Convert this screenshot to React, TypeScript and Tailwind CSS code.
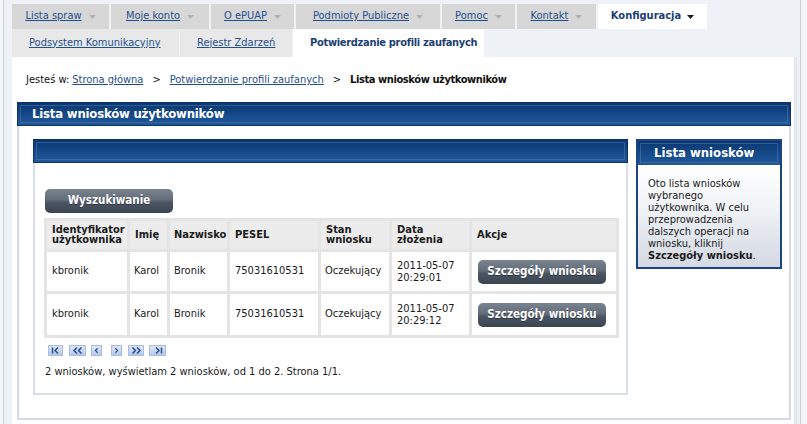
import React from 'react';

const font = "font-['DejaVu_Sans_Condensed','DejaVu_Sans',sans-serif]";

const topTabs = [
  { label: 'Lista spraw', w: 'w-[97px]' },
  { label: 'Moje konto', w: 'w-[98px]' },
  { label: 'O ePUAP', w: 'w-[83px]' },
  { label: 'Podmioty Publiczne', w: 'w-[144px]' },
  { label: 'Pomoc', w: 'w-[73px]' },
  { label: 'Kontakt', w: 'w-[79px]' },
];

const subTabs = [
  { label: 'Podsystem Komunikacyjny', w: 'w-[167px]' },
  { label: 'Rejestr Zdarzeń', w: 'w-[112px]' },
];

const rows = [
  { id: 'kbronik', name: 'Karol', surname: 'Bronik', pesel: '75031610531', status: 'Oczekujący', date: '2011-05-07', time: '20:29:01', h: 'h-[42px]' },
  { id: 'kbronik', name: 'Karol', surname: 'Bronik', pesel: '75031610531', status: 'Oczekujący', date: '2011-05-07', time: '20:29:12', h: 'h-[44px]' },
];

const Caret = ({ color }: { color: string }) => (
  <svg width="7" height="4" viewBox="0 0 7 4" className="mt-[1px]">
    <path d="M0 0h7L3.5 4z" fill={color} />
  </svg>
);

const NavyBar = ({ children, className = '' }: { children?: React.ReactNode; className?: string }) => (
  <div
    className={`bg-[linear-gradient(to_bottom,#0a3670,#164a8a_55%,#22589a)] border border-[#0b3466] p-[2px] ${className}`}
  >
    <div className="h-full border border-[#4a74aa]/60 flex items-center">{children}</div>
  </div>
);

const DarkButton = ({ label }: { label: string }) => (
  <div className="w-[128px] h-[24px] rounded-[5px] bg-[linear-gradient(to_bottom,#7a8491_0%,#636d7a_45%,#4b5563_55%,#3b4552_100%)] flex items-center justify-center text-white font-bold text-[11.5px] [text-shadow:0_1px_0_#2b333d]">
    {label}
  </div>
);

// pager glyphs, drawn as chevrons
const PagerBtn = ({ kind, w }: { kind: string; w: string }) => (
  <div className={`${w} h-[11px] bg-[linear-gradient(to_bottom,#dbe5f6,#b7c9ea)] border border-[#a9bde0] flex items-center justify-center`}>
    <svg width="12" height="7" viewBox="0 0 12 7" fill="none" stroke="#2a4e8e" strokeWidth="1.5">
      {kind === 'first' && (<><path d="M2.5 0.5v6" /><path d="M8 0.5L5 3.5l3 3" /></>)}
      {kind === 'prev2' && (<><path d="M5 0.5L2 3.5l3 3" /><path d="M9.5 0.5l-3 3 3 3" /></>)}
      {kind === 'prev' && <path d="M7.5 0.5l-3 3 3 3" />}
      {kind === 'next' && <path d="M4.5 0.5l3 3-3 3" />}
      {kind === 'next2' && (<><path d="M2.5 0.5l3 3-3 3" /><path d="M7 0.5l3 3-3 3" /></>)}
      {kind === 'last' && (<><path d="M4 0.5l3 3-3 3" /><path d="M9.5 0.5v6" /></>)}
    </svg>
  </div>
);

const App: React.FC = () => {
  return (
    <div className={`w-[807px] h-[424px] overflow-hidden bg-[#f4f5f8] pl-[3px] ${font}`}>
      <div className="w-[798px] h-full border-x border-[#c9cdd4] bg-[#eef1f6] pl-[8px] pr-[3px] pt-[4px] flex flex-col">
        {/* main menu */}
        <div className="flex h-[25px] gap-[2px]">
          {topTabs.map((t) => (
            <div key={t.label} className={`${t.w} bg-[#d7d7d7] flex items-center justify-center gap-[7px] text-[11px] text-[#1f4f8f]`}>
              <span className="underline">{t.label}</span>
              <Caret color="#b3b3b3" />
            </div>
          ))}
          <div className="w-[109px] bg-white flex items-center justify-center gap-[6px] text-[11px] font-bold text-[#1c3f73]">
            <span>Konfiguracja</span>
            <Caret color="#1a1a1a" />
          </div>
        </div>

        {/* submenu */}
        <div className="flex h-[28px] gap-[1px]">
          {subTabs.map((t) => (
            <div key={t.label} className={`${t.w} bg-[#e8e8e8] flex items-center pl-[17px] text-[11px] text-[#1f4f8f] underline`}>
              {t.label}
            </div>
          ))}
          <div className="w-[191px] bg-white flex items-center pl-[17px] text-[11px] font-bold tracking-[-0.3px] whitespace-nowrap text-[#1c3f73]">
            Potwierdzanie profili zaufanych
          </div>
        </div>

        {/* page */}
        <div className="flex-1 bg-white border-r-[3px] border-[#e3e7ee]">
          <div className="pt-[16px] pl-[14px] text-[11px] leading-[14px] text-[#111] flex items-center whitespace-nowrap">
            <span>Jesteś w:</span>
            <span className="ml-[3px] text-[#1f4f8f] underline">Strona główna</span>
            <span className="ml-[9px]">&gt;</span>
            <span className="ml-[9px] text-[#1f4f8f] underline">Potwierdzanie profili zaufanych</span>
            <span className="ml-[9px]">&gt;</span>
            <span className="ml-[9px] font-bold tracking-[-0.4px]">Lista wniosków użytkowników</span>
          </div>

          <div className="mt-[15px] ml-[5px] w-[774px] flex flex-col">
            <NavyBar className="h-[24px]">
              <span className="pl-[11px] text-white font-bold text-[13px] tracking-[-0.2px]">Lista wniosków użytkowników</span>
            </NavyBar>
            <div className="border-x-2 border-b-2 border-[#d6dce7] pt-[13px] pl-[14px] pr-[7px] pb-[23px] flex items-start gap-[8px]">
              {/* list panel */}
              <div className="w-[595px] flex flex-col">
                <NavyBar className="h-[24px]" />
                <div className="h-[232px] border-x-2 border-b-2 border-[#d9dfe9] pt-[26px] pl-[9px]">
                  <div className="ml-[1px]">
                    <DarkButton label="Wyszukiwanie" />
                  </div>
                  <table className="mt-[5px] w-[572px] table-fixed border-collapse text-[11px] text-[#1a1a1a]">
                    <colgroup>
                      <col className="w-[83px]" />
                      <col className="w-[40px]" />
                      <col className="w-[60px]" />
                      <col className="w-[91px]" />
                      <col className="w-[71px]" />
                      <col className="w-[80px]" />
                      <col className="w-[147px]" />
                    </colgroup>
                    <thead>
                      <tr className="h-[31px] bg-[#ececec] text-left font-bold leading-[10px]">
                        <th className="border-[3px] border-[#e4e4e4] px-[5px]">Identyfikator użytkownika</th>
                        <th className="border-[3px] border-[#e4e4e4] px-[5px]">Imię</th>
                        <th className="border-[3px] border-[#e4e4e4] px-[4px]">Nazwisko</th>
                        <th className="border-[3px] border-[#e4e4e4] px-[5px]">PESEL</th>
                        <th className="border-[3px] border-[#e4e4e4] px-[5px]">Stan wniosku</th>
                        <th className="border-[3px] border-[#e4e4e4] px-[5px]">Data złożenia</th>
                        <th className="border-[3px] border-[#e4e4e4] px-[5px]">Akcje</th>
                      </tr>
                    </thead>
                    <tbody>
                      {rows.map((r, i) => (
                        <tr key={i} className={r.h}>
                          <td className="border-[3px] border-[#e4e4e4] px-[5px]">{r.id}</td>
                          <td className="border-[3px] border-[#e4e4e4] px-[4px]">{r.name}</td>
                          <td className="border-[3px] border-[#e4e4e4] px-[4px]">{r.surname}</td>
                          <td className="border-[3px] border-[#e4e4e4] px-[5px]">{r.pesel}</td>
                          <td className="border-[3px] border-[#e4e4e4] px-[4px]">{r.status}</td>
                          <td className="border-[3px] border-[#e4e4e4] px-[5px] leading-[12px]">
                            {r.date}
                            <br />
                            {r.time}
                          </td>
                          <td className="border-[3px] border-[#e4e4e4] pl-[6px]">
                            <DarkButton label="Szczegóły wniosku" />
                          </td>
                        </tr>
                      ))}
                    </tbody>
                  </table>
                  <div className="mt-[7px] ml-[4px] flex items-center">
                    <PagerBtn kind="first" w="w-[15px]" />
                    <div className="ml-[6px]"><PagerBtn kind="prev2" w="w-[17px]" /></div>
                    <div className="ml-[5px]"><PagerBtn kind="prev" w="w-[11px]" /></div>
                    <div className="ml-[9px]"><PagerBtn kind="next" w="w-[11px]" /></div>
                    <div className="ml-[6px]"><PagerBtn kind="next2" w="w-[16px]" /></div>
                    <div className="ml-[5px]"><PagerBtn kind="last" w="w-[17px]" /></div>
                  </div>
                  <div className="mt-[8px] ml-[1px] text-[11px] text-[#1a1a1a]">
                    2 wniosków, wyświetlam 2 wniosków, od 1 do 2. Strona 1/1.
                  </div>
                </div>
              </div>

              {/* help panel */}
              <div className="w-[146px] border-2 border-[#1b4582] flex flex-col">
                <div className="h-[24px] bg-[linear-gradient(to_bottom,#0a3670,#164a8a_55%,#22589a)] p-[2px]">
                  <div className="h-full border border-[#4a74aa]/60 flex items-center pl-[13px] text-white font-bold text-[13px]">
                    Lista wniosków
                  </div>
                </div>
                <div className="bg-[linear-gradient(to_bottom,#ffffff,#f1f3f7_40%,#d3d9e3)] pt-[13px] pl-[10px] pb-[5px] text-[11px] leading-[12px] text-[#1a1a1a]">
                  Oto lista wniosków
                  <br />
                  wybranego
                  <br />
                  użytkownika. W celu
                  <br />
                  przeprowadzenia
                  <br />
                  dalszych operacji na
                  <br />
                  wniosku, kliknij
                  <br />
                  <span className="font-bold">Szczegóły wniosku</span>.
                </div>
              </div>
            </div>
          </div>
        </div>
      </div>
    </div>
  );
};

export default App;
